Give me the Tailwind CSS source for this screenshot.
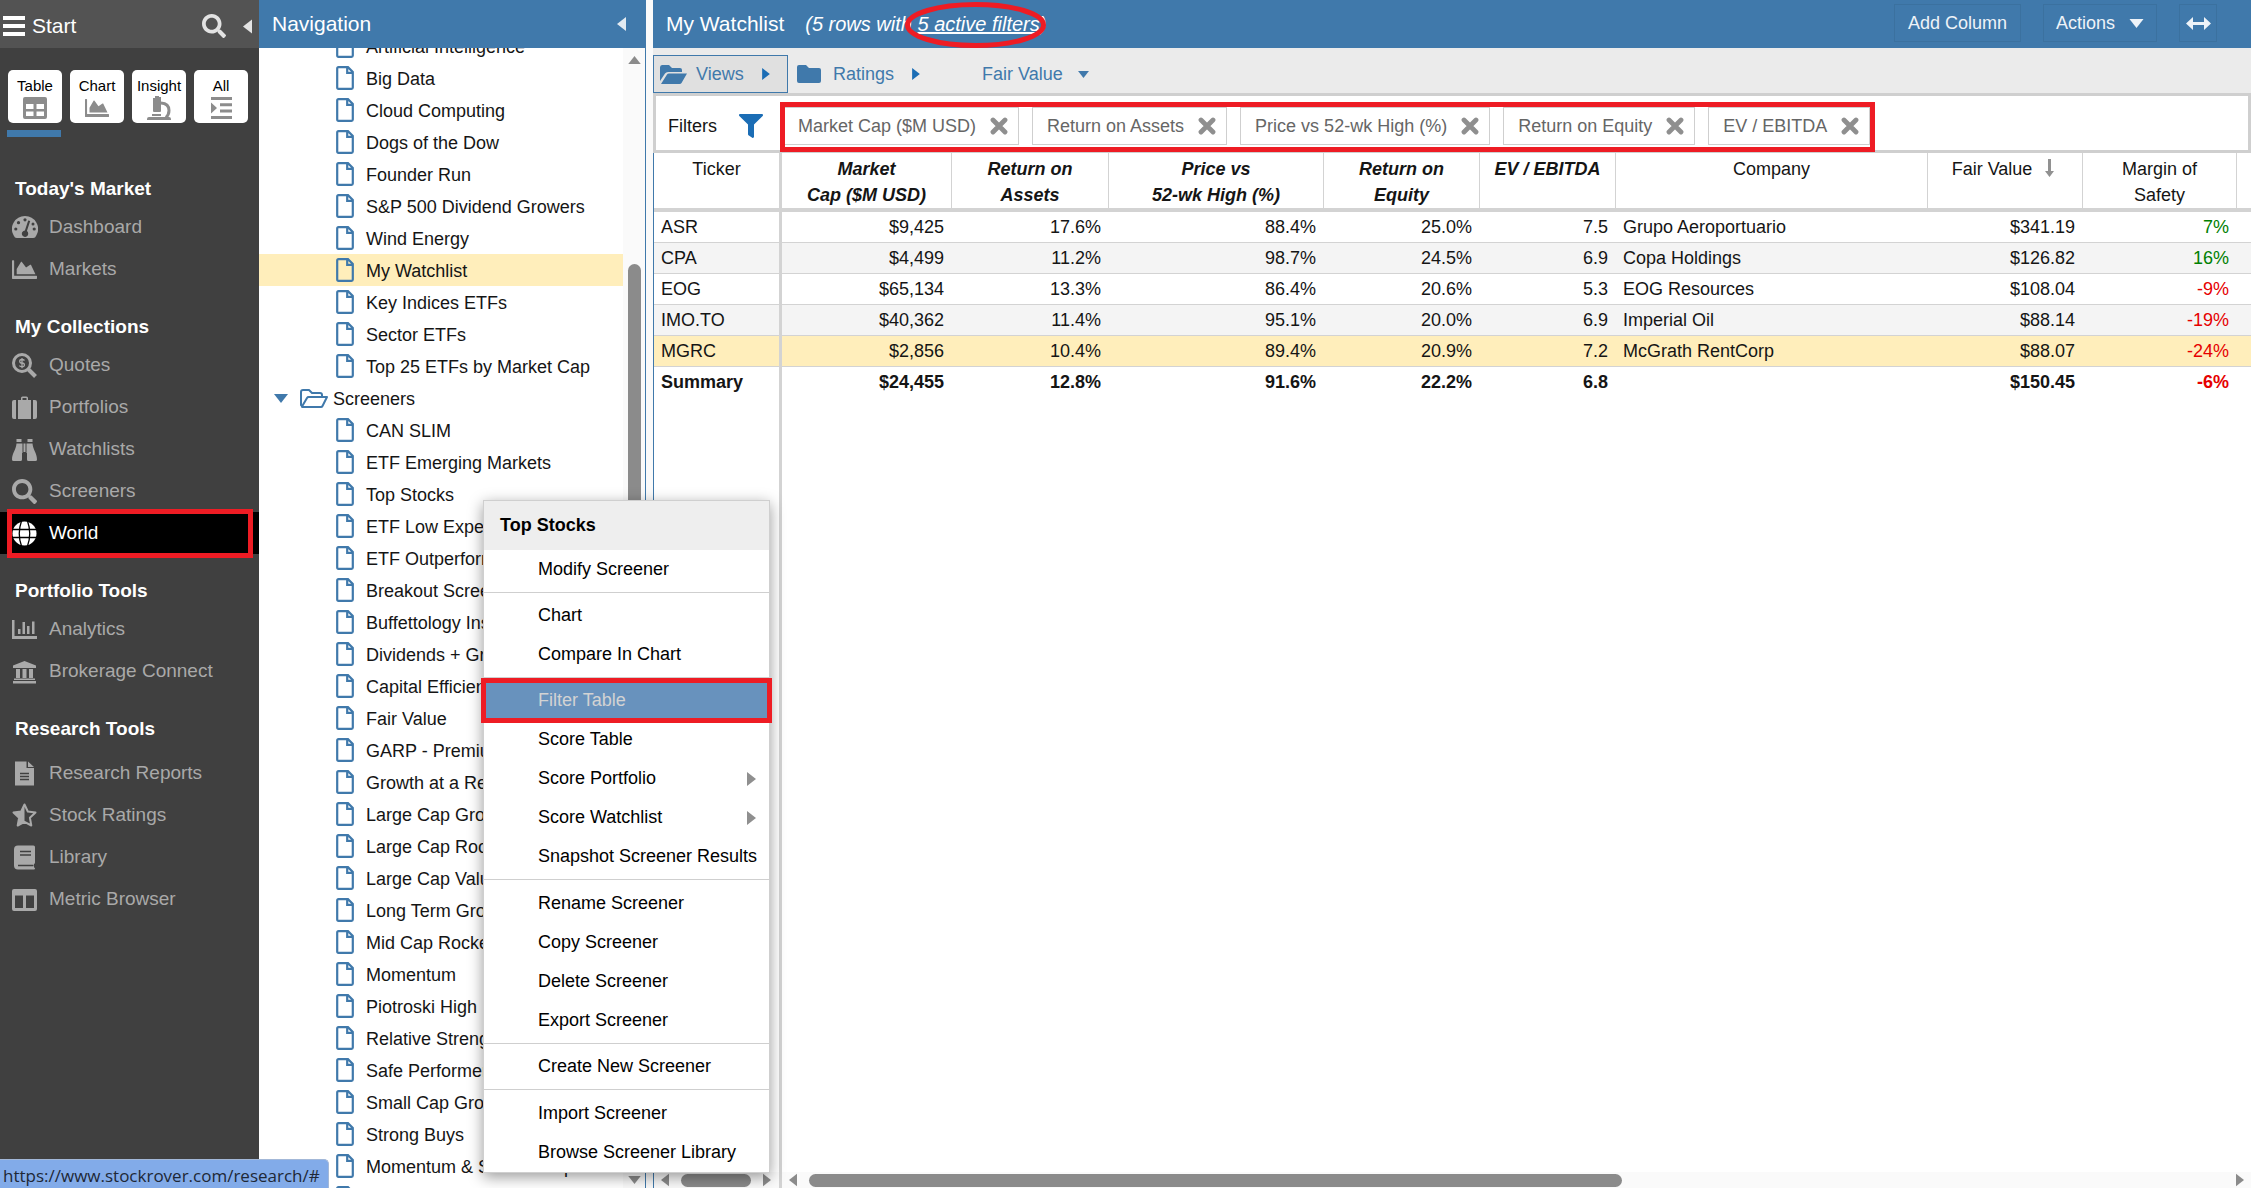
<!DOCTYPE html>
<html lang="en">
<head>
  <meta charset="UTF-8" />
  <meta name="viewport" content="width=device-width, initial-scale=1.0"/>
  <title>My Watchlist - Stock Rover</title>
  <script src="https://cdn.jsdelivr.net/npm/@tailwindcss/browser@4"></script>
</head>
<body class="h-screen overflow-hidden bg-white font-['Liberation_Sans',Arial,sans-serif] text-[18px] text-[#151515]">

  <!-- shared icons -->
  <svg class="hidden">
    <symbol id="i-search" viewBox="0 0 512 512"><path d="M505 442.700L405.300 343c-4.500-4.500-10.600-7-17-7H372c27.600-35.300 44-79.700 44-128C416 93.100 322.900 0 208 0S0 93.100 0 208s93.100 208 208 208c48.300 0 92.700-16.400 128-44v16.300c0 6.400 2.500 12.500 7 17l99.700 99.700c9.400 9.400 24.600 9.400 33.900 0l28.300-28.300c9.400-9.400 9.400-24.600.1-34zM208 336c-70.700 0-128-57.200-128-128 0-70.700 57.200-128 128-128 70.700 0 128 57.200 128 128 0 70.700-57.200 128-128 128z"/></symbol>
    <symbol id="i-area" viewBox="0 0 512 512"><path d="M500 384c6.600 0 12 5.400 12 12v40c0 6.600-5.400 12-12 12H12c-6.600 0-12-5.400-12-12V76c0-6.600 5.400-12 12-12h20c6.600 0 12 5.400 12 12v308h456zM372.700 159.500L288 216l-85.300-113.700c-5.100-6.800-15.500-6.300-19.900 1L96 248v104h384l-89.900-187.800c-3.200-6.500-11.400-8.700-17.400-4.700z"/></symbol>
    <symbol id="i-file" viewBox="0 0 18 24"><path d="M2.500 1.200H12L16.800 6v15.500q0 1.300-1.300 1.300h-13q-1.300 0-1.300-1.300v-19q0-1.300 1.300-1.300zM11.200 1.500v5.300h5.300" fill="none" stroke="currentColor" stroke-width="2.200"/></symbol>
    <symbol id="i-x" viewBox="0 0 18 18"><path d="M3 3l12 12M15 3L3 15" stroke="currentColor" stroke-width="4.800" stroke-linecap="round"/></symbol>
    <symbol id="i-left" viewBox="0 0 9 14"><path d="M9 0v14L0 7z"/></symbol>
    <symbol id="i-right" viewBox="0 0 9 14"><path d="M0 0v14l9-7z"/></symbol>
    <symbol id="i-down" viewBox="0 0 14 9"><path d="M0 0h14L7 9z"/></symbol>
    <symbol id="i-up" viewBox="0 0 14 9"><path d="M0 9h14L7 0z"/></symbol>
  </svg>

  <div class="flex h-screen pr-[7px]">

    <!-- left menu -->
    <aside class="flex w-[259px] shrink-0 flex-col bg-[#404040] text-[19px] text-[#a9a9a9]">
      <div class="flex h-12 shrink-0 items-center bg-[#535353] pt-1 pr-[7px] pl-[3px] text-[21px] text-white">
        <svg class="mr-[7px] h-5 w-[22px]" viewBox="0 0 22 20" fill="currentColor"><path d="M0 0h22v4H0zM0 8h22v4H0zM0 16h22v4H0z"/></svg>
        <span class="flex-1">Start</span>
        <button aria-label="Search"><svg class="mr-[17px] size-6 fill-[#e3e3e3]"><use href="#i-search"/></svg></button>
        <button aria-label="Collapse menu"><svg class="h-[15px] w-[9px] fill-[#e3e3e3]"><use href="#i-left"/></svg></button>
      </div>

      <div class="flex shrink-0 gap-2 px-2 pt-[22px] text-[15px] text-black">
        <button class="flex h-[53px] w-[54px] flex-col items-center rounded-[5px] bg-white pt-[5px] leading-[21px]">Table
          <svg class="size-6" viewBox="0 0 24 24" fill="#8c8c8c"><path fill-rule="evenodd" d="M2 1h20q2 0 2 2v18q0 2-2 2H2q-2 0-2-2V3q0-2 2-2zM3 8v5h7.500V8zM13.500 8v5H21V8zM3 15.500v4.500h7.500v-4.500zM13.500 15.500v4.500H21v-4.500z"/></svg>
        </button>
        <button class="flex h-[53px] w-[54px] flex-col items-center rounded-[5px] bg-white pt-[5px] leading-[21px]">Chart
          <svg class="size-6 fill-[#8c8c8c]"><use href="#i-area"/></svg>
        </button>
        <button class="flex h-[53px] w-[54px] flex-col items-center rounded-[5px] bg-white pt-[5px] leading-[21px]">Insight
          <svg class="size-6" viewBox="0 0 24 24" fill="#8c8c8c"><path d="M8 0h4v1h2v14q0 1-1 1H7q-1 0-1-1V2h2zM5 18h9v2H5zM0 24v-1q0-2 2-2h20q2 0 2 2v1z"/><path d="M14 7q8 .5 8 7.500 0 4-3 7" fill="none" stroke="#8c8c8c" stroke-width="3"/></svg>
        </button>
        <button class="flex h-[53px] w-[54px] flex-col items-center rounded-[5px] bg-white pt-[5px] leading-[21px]">All
          <svg class="size-6" viewBox="0 0 24 24" fill="#8c8c8c"><path d="M2 1h21v3H2zM11 7.300h12v3H11zM11 13.600h12v3H11zM2 20h21v3H2zM2 6.500l6 5.500-6 5.500z"/></svg>
        </button>
      </div>
      <div class="mt-[7px] ml-[7px] h-[7px] w-[54px] shrink-0 bg-[#4079ab]"></div>

      <nav class="pt-[15px]">
        <h2 class="flex h-[54px] items-center pt-5 pl-[15px] font-bold text-white">Today's Market</h2>
        <a href="#" class="flex h-[42px] items-center gap-[11px] pl-3">
          <svg class="h-[22px] w-[26px]" viewBox="0 0 26 22" fill="currentColor"><path d="M13 0a13 13 0 0 1 11.300 19.500q-1 2.500-3 2.500H4.700q-2 0-3-2.500A13 13 0 0 1 13 0z"/><g fill="#404040"><circle cx="13" cy="3.800" r="1.600"/><circle cx="6.500" cy="6.700" r="1.600"/><circle cx="3.800" cy="13" r="1.600"/><circle cx="22.200" cy="13" r="1.600"/><circle cx="21" cy="8" r="1.500"/><path d="M16.200 4.500l2 .6-3.300 10a3.200 3.200 0 1 1-2-.6z"/></g></svg>Dashboard</a>
        <a href="#" class="flex h-[42px] items-center gap-3 pl-3"><svg class="size-[25px] fill-current"><use href="#i-area"/></svg>Markets</a>

        <h2 class="flex h-[54px] items-center pt-5 pl-[15px] font-bold text-white">My Collections</h2>
        <a href="#" class="flex h-[42px] items-center gap-3 pl-3">
          <svg class="size-[25px]" viewBox="0 0 25 25" fill="none" stroke="currentColor"><circle cx="10" cy="10" r="8.500" stroke-width="3"/><path d="M16.500 16.500l7 7" stroke-width="4"/><path d="M12.500 7.500q-1-1-2.500-1-2.300 0-2.300 1.800T10 10t2.400 1.900-2.400 1.800q-1.700 0-2.600-1.100M10 5v10.200" stroke-width="1.300"/></svg>Quotes</a>
        <a href="#" class="flex h-[42px] items-center gap-3 pl-3">
          <svg class="size-[25px]" viewBox="0 0 25 25" fill="currentColor"><path d="M0 7q0-2 2-2h2v19H2q-2 0-2-2zM25 7q0-2-2-2h-2v19h2q2 0 2-2zM6 24V5h3V3q0-1.500 1.500-1.500h4Q16 1.500 16 3v2h3v19zM10.500 5h4V3h-4z"/></svg>Portfolios</a>
        <a href="#" class="flex h-[42px] items-center gap-3 pl-3">
          <svg class="size-[25px]" viewBox="0 0 25 25" fill="currentColor"><path d="M4.500 2h5v3h-5zM15.500 2h5v3h-5zM4.500 6.500h6V16H10v6.500Q10 24 8.500 24H1.500Q0 24 0 22.500C0 16 4 13 4.500 6.500zM20.500 6.500h-6V16h.5v6.500q0 1.500 1.500 1.500h7q1.500 0 1.500-1.500C25 16 21 13 20.500 6.500zM11.500 6.500h2V15h-2z"/></svg>Watchlists</a>
        <a href="#" class="flex h-[42px] items-center gap-3 pl-3"><svg class="size-[25px] fill-current"><use href="#i-search"/></svg>Screeners</a>
        <a href="#" class="relative flex h-[42px] items-center gap-3 bg-black pl-3 text-white">
          <svg class="size-[25px]" viewBox="0 0 25 25"><circle cx="12.500" cy="12.500" r="12" fill="#fff"/><path d="M0 8.500h25M0 16.500h25M9.500 0Q5 12.500 9.500 25M15.500 0Q20 12.500 15.500 25" fill="none" stroke="#000" stroke-width="1.300"/></svg>World
          <span class="absolute -top-[3px] right-[6px] -bottom-[4px] left-[7px] border-5 border-[#ee1c24]"></span>
        </a>

        <h2 class="flex h-[54px] items-center pt-5 pl-[15px] font-bold text-white">Portfolio Tools</h2>
        <a href="#" class="flex h-[42px] items-center gap-3 pl-3">
          <svg class="size-[25px]" viewBox="0 0 25 25" fill="currentColor"><path d="M0 3h2.500v16H25v3H0zM6 12h2.500v5H6zM10.500 5H13v12h-2.500zM15 9h2.500v8H15zM20 4.500h2.500V17H20z"/></svg>Analytics</a>
        <a href="#" class="flex h-[42px] items-center gap-3 pl-3">
          <svg class="size-[25px]" viewBox="0 0 25 25" fill="currentColor"><path d="M12.500 2L24 6.500V9H1V6.500zM4 10h4v9H4zM10.500 10h4v9h-4zM17 10h4v9h-4zM2 19.500h21V21H2zM1 22h23v2.500H1z"/></svg>Brokerage Connect</a>

        <h2 class="flex h-[60px] items-center pt-5 pb-[6px] pl-[15px] font-bold text-white">Research Tools</h2>
        <a href="#" class="flex h-[42px] items-center gap-3 pl-3">
          <svg class="size-[25px]" viewBox="0 0 25 25" fill="currentColor"><path d="M3 .5h11.500V7H22v17.500H3zM16 .5L22 6h-6z"/><path d="M8 12.500h9M8 15.500h9M8 18.500h9" stroke="#404040" stroke-width="1.300"/></svg>Research Reports</a>
        <a href="#" class="flex h-[42px] items-center gap-3 pl-3">
          <svg class="size-[25px]" viewBox="0 0 25 25" fill="currentColor"><path d="M12.500 1.500l3.300 7 7.700 1-5.600 5.300 1.400 7.700-6.800-3.700-6.800 3.700 1.400-7.700L1.500 9.500l7.700-1z" fill="none" stroke="currentColor" stroke-width="2" stroke-linejoin="round"/><path d="M12.500 1.500v17.300l-6.800 3.700 1.400-7.700L1.500 9.500l7.700-1z"/></svg>Stock Ratings</a>
        <a href="#" class="flex h-[42px] items-center gap-3 pl-3">
          <svg class="size-[25px]" viewBox="0 0 25 25" fill="currentColor"><path d="M6 .5h15.500q1.500 0 1.500 1.500v15.500q0 1-1 1.500v3.500q1 0 1 1t-1 1H6q-4 0-4-4v-16q0-4 4-4z"/><path d="M8 6.500h11M8 10h11M6 20.500h15.500" stroke="#404040" stroke-width="1.500"/></svg>Library</a>
        <a href="#" class="flex h-[42px] items-center gap-3 pl-3">
          <svg class="size-[25px]" viewBox="0 0 25 25" fill="currentColor"><path fill-rule="evenodd" d="M2 2h21q2 0 2 2v18q0 2-2 2H2q-2 0-2-2V4q0-2 2-2zM3 8.500V21h8V8.500zM14 8.500V21h8V8.500z"/></svg>Metric Browser</a>
      </nav>
    </aside>

    <!-- navigation tree -->
    <section class="flex w-[387px] shrink-0 flex-col">
      <div class="flex h-12 shrink-0 items-center justify-between bg-[#4079ab] pr-5 pl-[13px] text-[21px] text-white">
        <h1>Navigation</h1>
        <button aria-label="Collapse navigation"><svg class="h-[14px] w-[9px] fill-[#e3ebf2]"><use href="#i-left"/></svg></button>
      </div>
      <div class="flex min-h-0 flex-1 border-r border-[#4079ab]">
        <ul class="-mt-[18px] flex-1 overflow-hidden whitespace-nowrap [clip-path:inset(18px_0_0_0)] [&_a]:pt-[2px] [&_svg]:shrink-0">
          <li class="flex h-8 items-center pl-[77px]"><svg class="mr-3 h-6 w-[18px] text-[#4079ab]"><use href="#i-file"/></svg><a href="#">Artificial Intelligence</a></li>
          <li class="flex h-8 items-center pl-[77px]"><svg class="mr-3 h-6 w-[18px] text-[#4079ab]"><use href="#i-file"/></svg><a href="#">Big Data</a></li>
          <li class="flex h-8 items-center pl-[77px]"><svg class="mr-3 h-6 w-[18px] text-[#4079ab]"><use href="#i-file"/></svg><a href="#">Cloud Computing</a></li>
          <li class="flex h-8 items-center pl-[77px]"><svg class="mr-3 h-6 w-[18px] text-[#4079ab]"><use href="#i-file"/></svg><a href="#">Dogs of the Dow</a></li>
          <li class="flex h-8 items-center pl-[77px]"><svg class="mr-3 h-6 w-[18px] text-[#4079ab]"><use href="#i-file"/></svg><a href="#">Founder Run</a></li>
          <li class="flex h-8 items-center pl-[77px]"><svg class="mr-3 h-6 w-[18px] text-[#4079ab]"><use href="#i-file"/></svg><a href="#">S&amp;P 500 Dividend Growers</a></li>
          <li class="flex h-8 items-center pl-[77px]"><svg class="mr-3 h-6 w-[18px] text-[#4079ab]"><use href="#i-file"/></svg><a href="#">Wind Energy</a></li>
          <li class="flex h-8 items-center bg-[#ffeebb] pl-[77px]"><svg class="mr-3 h-6 w-[18px] text-[#4079ab]"><use href="#i-file"/></svg><a href="#">My Watchlist</a></li>
          <li class="flex h-8 items-center pl-[77px]"><svg class="mr-3 h-6 w-[18px] text-[#4079ab]"><use href="#i-file"/></svg><a href="#">Key Indices ETFs</a></li>
          <li class="flex h-8 items-center pl-[77px]"><svg class="mr-3 h-6 w-[18px] text-[#4079ab]"><use href="#i-file"/></svg><a href="#">Sector ETFs</a></li>
          <li class="flex h-8 items-center pl-[77px]"><svg class="mr-3 h-6 w-[18px] text-[#4079ab]"><use href="#i-file"/></svg><a href="#">Top 25 ETFs by Market Cap</a></li>
          <li class="flex h-8 items-center pl-[15px]">
            <svg class="mr-3 h-[9px] w-[14px] fill-[#4079ab]"><use href="#i-down"/></svg>
            <svg class="mr-[5px] h-[19px] w-7" viewBox="0 0 28 19" fill="none" stroke="#4079ab" stroke-width="2" stroke-linejoin="round"><path d="M2 17L1 16V3q0-2 2-2h6l3 3h8q2 0 2 2v2M2 17.500L7 9q.6-1 1.500-1H27l-4.500 9q-.5 1-1.500 1H3q-1.500 0-1-.5z"/></svg>
            <a href="#">Screeners</a></li>
          <li class="flex h-8 items-center pl-[77px]"><svg class="mr-3 h-6 w-[18px] text-[#4079ab]"><use href="#i-file"/></svg><a href="#">CAN SLIM</a></li>
          <li class="flex h-8 items-center pl-[77px]"><svg class="mr-3 h-6 w-[18px] text-[#4079ab]"><use href="#i-file"/></svg><a href="#">ETF Emerging Markets</a></li>
          <li class="flex h-8 items-center pl-[77px]"><svg class="mr-3 h-6 w-[18px] text-[#4079ab]"><use href="#i-file"/></svg><a href="#">Top Stocks</a></li>
          <li class="flex h-8 items-center pl-[77px]"><svg class="mr-3 h-6 w-[18px] text-[#4079ab]"><use href="#i-file"/></svg><a href="#">ETF Low Expense</a></li>
          <li class="flex h-8 items-center pl-[77px]"><svg class="mr-3 h-6 w-[18px] text-[#4079ab]"><use href="#i-file"/></svg><a href="#">ETF Outperform</a></li>
          <li class="flex h-8 items-center pl-[77px]"><svg class="mr-3 h-6 w-[18px] text-[#4079ab]"><use href="#i-file"/></svg><a href="#">Breakout Screen</a></li>
          <li class="flex h-8 items-center pl-[77px]"><svg class="mr-3 h-6 w-[18px] text-[#4079ab]"><use href="#i-file"/></svg><a href="#">Buffettology Insp</a></li>
          <li class="flex h-8 items-center pl-[77px]"><svg class="mr-3 h-6 w-[18px] text-[#4079ab]"><use href="#i-file"/></svg><a href="#">Dividends + Gro</a></li>
          <li class="flex h-8 items-center pl-[77px]"><svg class="mr-3 h-6 w-[18px] text-[#4079ab]"><use href="#i-file"/></svg><a href="#">Capital Efficient</a></li>
          <li class="flex h-8 items-center pl-[77px]"><svg class="mr-3 h-6 w-[18px] text-[#4079ab]"><use href="#i-file"/></svg><a href="#">Fair Value</a></li>
          <li class="flex h-8 items-center pl-[77px]"><svg class="mr-3 h-6 w-[18px] text-[#4079ab]"><use href="#i-file"/></svg><a href="#">GARP - Premium</a></li>
          <li class="flex h-8 items-center pl-[77px]"><svg class="mr-3 h-6 w-[18px] text-[#4079ab]"><use href="#i-file"/></svg><a href="#">Growth at a Reas</a></li>
          <li class="flex h-8 items-center pl-[77px]"><svg class="mr-3 h-6 w-[18px] text-[#4079ab]"><use href="#i-file"/></svg><a href="#">Large Cap Grow</a></li>
          <li class="flex h-8 items-center pl-[77px]"><svg class="mr-3 h-6 w-[18px] text-[#4079ab]"><use href="#i-file"/></svg><a href="#">Large Cap Rock</a></li>
          <li class="flex h-8 items-center pl-[77px]"><svg class="mr-3 h-6 w-[18px] text-[#4079ab]"><use href="#i-file"/></svg><a href="#">Large Cap Value</a></li>
          <li class="flex h-8 items-center pl-[77px]"><svg class="mr-3 h-6 w-[18px] text-[#4079ab]"><use href="#i-file"/></svg><a href="#">Long Term Grow</a></li>
          <li class="flex h-8 items-center pl-[77px]"><svg class="mr-3 h-6 w-[18px] text-[#4079ab]"><use href="#i-file"/></svg><a href="#">Mid Cap Rockets</a></li>
          <li class="flex h-8 items-center pl-[77px]"><svg class="mr-3 h-6 w-[18px] text-[#4079ab]"><use href="#i-file"/></svg><a href="#">Momentum</a></li>
          <li class="flex h-8 items-center pl-[77px]"><svg class="mr-3 h-6 w-[18px] text-[#4079ab]"><use href="#i-file"/></svg><a href="#">Piotroski High</a></li>
          <li class="flex h-8 items-center pl-[77px]"><svg class="mr-3 h-6 w-[18px] text-[#4079ab]"><use href="#i-file"/></svg><a href="#">Relative Strength</a></li>
          <li class="flex h-8 items-center pl-[77px]"><svg class="mr-3 h-6 w-[18px] text-[#4079ab]"><use href="#i-file"/></svg><a href="#">Safe Performers</a></li>
          <li class="flex h-8 items-center pl-[77px]"><svg class="mr-3 h-6 w-[18px] text-[#4079ab]"><use href="#i-file"/></svg><a href="#">Small Cap Grow</a></li>
          <li class="flex h-8 items-center pl-[77px]"><svg class="mr-3 h-6 w-[18px] text-[#4079ab]"><use href="#i-file"/></svg><a href="#">Strong Buys</a></li>
          <li class="flex h-8 items-center pl-[77px]"><svg class="mr-3 h-6 w-[18px] text-[#4079ab]"><use href="#i-file"/></svg><a href="#">Momentum &amp; Sector Outperform</a></li>
          <li class="flex h-8 items-center pl-[77px]"><svg class="mr-3 h-6 w-[18px] text-[#4079ab]"><use href="#i-file"/></svg></li>
        </ul>
        <div class="flex w-[22px] shrink-0 flex-col items-center bg-[#fafafa] py-1">
          <svg class="mt-1 h-2 w-[15px] shrink-0 fill-[#8b8b8b]"><use href="#i-up"/></svg>
          <div class="mt-[200px] h-[500px] w-[13px] rounded-full bg-[#8b8b8b]"></div>
          <div class="flex-1"></div>
          <svg class="h-2 w-[15px] shrink-0 fill-[#8b8b8b]"><use href="#i-down"/></svg>
        </div>
      </div>
    </section>

    <div class="w-[7px] shrink-0 bg-[#fafafa]"></div>

    <!-- watchlist table -->
    <main class="flex min-w-0 flex-1 flex-col">
      <div class="flex h-12 shrink-0 items-center bg-[#4079ab] pr-[34px] pl-[13px] text-white">
        <h1 class="mr-[21px] text-[21px]">My Watchlist</h1>
        <p class="flex-1 text-[20px] italic">(5 rows with <span class="relative"><a href="#" class="underline">5 active filters</a>)<svg class="absolute -top-[11px] -left-[13px] h-[46px] w-[143px]" viewBox="0 0 143 46"><ellipse cx="71.500" cy="23" rx="68" ry="20.500" fill="none" stroke="#ee1c24" stroke-width="5"/></svg></span></p>
        <div class="flex items-center gap-[22px] pb-[2px] text-[18px] text-[#eef3f8]">
          <button class="h-[38px] border border-[#3b719f] px-[13px]">Add Column</button>
          <button class="flex h-[38px] items-center gap-[14px] border border-[#3b719f] px-3">Actions <svg class="h-[9px] w-[15px] fill-current"><use href="#i-down"/></svg></button>
          <button aria-label="Fit width" class="flex h-[38px] w-[38px] items-center justify-center border border-[#3b719f]"><svg class="h-[13px] w-[25px] fill-current" viewBox="0 0 25 13"><path d="M7 0v5h11V0l7 6.500-7 6.500V8H7v5L0 6.500z"/></svg></button>
        </div>
      </div>

      <div class="flex h-[45px] shrink-0 items-end bg-[#ebebeb] text-[#4079ab]">
        <button class="flex h-[38px] w-[135px] items-center border border-[#4079ab] bg-[#e0e0e0] pl-[6px]">
          <svg class="mr-[9px] h-[19px] w-[27px] fill-current" viewBox="0 0 27 19"><path d="M0 2.500Q0 0 2 0h7l3 3h8q2 0 2 2v2H8Q6 7 5 8.500L0 16zM1 19l6-9.500Q7.500 8.500 9 8.500h18L21.500 18q-.5 1-2 1z"/></svg>
          Views
          <svg class="ml-[18px] h-[12px] w-[8px] fill-[#1b6db5]"><use href="#i-right"/></svg>
        </button>
        <button class="flex h-[38px] items-center pl-[9px]">
          <svg class="mr-3 h-[18px] w-6 fill-current" viewBox="0 0 24 18"><path d="M0 2q0-2 2-2h7l3 3h10q2 0 2 2v11q0 2-2 2H2q-2 0-2-2z"/></svg>
          Ratings
          <svg class="ml-[18px] h-[12px] w-[8px] fill-[#1b6db5]"><use href="#i-right"/></svg>
        </button>
        <button class="flex h-[38px] items-center pl-[62px]">Fair Value <svg class="ml-[15px] h-[7px] w-[11px] fill-current"><use href="#i-down"/></svg></button>
      </div>

      <div class="flex h-[60px] shrink-0 items-center border-3 border-[#cfcfcf] pt-[6px] pl-3">
        <span>Filters</span>
        <svg class="mr-[20px] ml-[22px] size-6 fill-[#1b6db5]" viewBox="0 0 512 512"><path d="M487.976 0H24.028C2.710 0-8.047 25.866 7.058 40.971L192 225.941V432c0 7.831 3.821 15.170 10.237 19.662l80 55.980C298.020 518.690 320 507.493 320 487.980V225.941l184.947-184.970C520.021 25.896 509.338 0 487.976 0z"/></svg>
        <div class="relative flex gap-[13px] text-[#666]">
          <button class="flex h-[38px] items-center gap-[14px] border border-[#cfcfcf] pr-[10px] pl-[14px]">Market Cap ($M USD)<svg class="size-[18px] text-[#8f8f8f]"><use href="#i-x"/></svg></button>
          <button class="flex h-[38px] items-center gap-[14px] border border-[#cfcfcf] pr-[10px] pl-[14px]">Return on Assets<svg class="size-[18px] text-[#8f8f8f]"><use href="#i-x"/></svg></button>
          <button class="flex h-[38px] items-center gap-[14px] border border-[#cfcfcf] pr-[10px] pl-[14px]">Price vs 52-wk High (%)<svg class="size-[18px] text-[#8f8f8f]"><use href="#i-x"/></svg></button>
          <button class="flex h-[38px] items-center gap-[14px] border border-[#cfcfcf] pr-[10px] pl-[14px]">Return on Equity<svg class="size-[18px] text-[#8f8f8f]"><use href="#i-x"/></svg></button>
          <button class="flex h-[38px] items-center gap-[14px] border border-[#cfcfcf] pr-[10px] pl-[14px]">EV / EBITDA<svg class="size-[18px] text-[#8f8f8f]"><use href="#i-x"/></svg></button>
          <span class="pointer-events-none absolute -top-[5px] -right-[5px] -bottom-[7px] -left-[3px] border-5 border-[#ee1c24]"></span>
        </div>
      </div>

      <div class="flex min-h-0 flex-1 flex-col border-l border-[#4079ab]">
        <table class="w-full table-fixed border-separate border-spacing-0 text-right">
          <colgroup>
            <col class="w-[128px]"><col class="w-[170px]"><col class="w-[157px]"><col class="w-[215px]"><col class="w-[156px]"><col class="w-[136px]"><col><col class="w-[155px]"><col class="w-[154px]"><col class="w-[14px]">
          </colgroup>
          <thead>
            <tr class="h-[59px] text-center align-top leading-[26px] [&>th]:border-b-4 [&>th]:border-[#d3d3d3] [&>th]:pt-[3px]">
              <th class="border-r-3 font-normal">Ticker</th>
              <th class="border-r italic">Market<br>Cap ($M USD)</th>
              <th class="border-r italic">Return on<br>Assets</th>
              <th class="border-r italic">Price vs<br>52-wk High (%)</th>
              <th class="border-r italic">Return on<br>Equity</th>
              <th class="border-r italic">EV / EBITDA</th>
              <th class="border-r font-normal">Company</th>
              <th class="border-r font-normal">Fair Value <svg class="mr-1 mb-1 ml-2 inline h-[18px] w-[9px] fill-[#919191]" viewBox="0 0 9 18"><path d="M3 0h3v12h3l-4.500 6L0 12h3z"/></svg></th>
              <th class="border-r font-normal">Margin of<br>Safety</th>
              <th></th>
            </tr>
          </thead>
          <tbody class="[&_td]:border-b [&_td]:border-[#d3d3d3] [&_td]:pr-2 [&_td:first-child]:border-r-3 [&_td:first-child]:pl-[7px] [&_td:first-child]:text-left [&_td:nth-child(7)]:pl-[7px] [&_td:nth-child(7)]:text-left">
            <tr class="h-[31px]"><td>ASR</td><td>$9,425</td><td>17.6%</td><td>88.4%</td><td>25.0%</td><td>7.5</td><td>Grupo Aeroportuario</td><td>$341.19</td><td class="text-[#008000]">7%</td><td></td></tr>
            <tr class="h-[31px] bg-[#f4f4f4]"><td>CPA</td><td>$4,499</td><td>11.2%</td><td>98.7%</td><td>24.5%</td><td>6.9</td><td>Copa Holdings</td><td>$126.82</td><td class="text-[#008000]">16%</td><td></td></tr>
            <tr class="h-[31px]"><td>EOG</td><td>$65,134</td><td>13.3%</td><td>86.4%</td><td>20.6%</td><td>5.3</td><td>EOG Resources</td><td>$108.04</td><td class="text-[#e60000]">-9%</td><td></td></tr>
            <tr class="h-[31px] bg-[#f4f4f4]"><td>IMO.TO</td><td>$40,362</td><td>11.4%</td><td>95.1%</td><td>20.0%</td><td>6.9</td><td>Imperial Oil</td><td>$88.14</td><td class="text-[#e60000]">-19%</td><td></td></tr>
            <tr class="h-[31px] bg-[#ffeebb]"><td>MGRC</td><td>$2,856</td><td>10.4%</td><td>89.4%</td><td>20.9%</td><td>7.2</td><td>McGrath RentCorp</td><td>$88.07</td><td class="text-[#e60000]">-24%</td><td></td></tr>
          </tbody>
          <tfoot class="[&_td]:pr-2">
            <tr class="h-[31px] font-bold"><td class="border-r-3 border-[#d3d3d3] pl-[7px] text-left">Summary</td><td>$24,455</td><td>12.8%</td><td>91.6%</td><td>22.2%</td><td>6.8</td><td></td><td>$150.45</td><td class="text-[#e60000]">-6%</td><td></td></tr>
          </tfoot>
        </table>
        <div class="w-[128px] flex-1 border-r-3 border-[#d3d3d3]"></div>
        <!-- horizontal scroll bars -->
        <div class="flex h-4 shrink-0 bg-[#fafafa]">
          <div class="flex w-[128px] items-center border-r-3 border-[#d3d3d3] pl-[7px]">
            <svg class="h-[14px] w-2 fill-[#8b8b8b]"><use href="#i-left"/></svg>
            <div class="mx-3 h-[13px] w-[70px] rounded-full bg-[#8b8b8b]"></div>
            <svg class="h-[14px] w-2 fill-[#8b8b8b]"><use href="#i-right"/></svg>
          </div>
          <div class="flex flex-1 items-center px-[7px]">
            <svg class="mr-3 h-[14px] w-2 fill-[#8b8b8b]"><use href="#i-left"/></svg>
            <div class="flex-1"><div class="h-[13px] w-[57%] rounded-full bg-[#8b8b8b]"></div></div>
            <svg class="h-[14px] w-2 fill-[#8b8b8b]"><use href="#i-right"/></svg>
          </div>
        </div>
      </div>
    </main>
  </div>

  <!-- right-click menu of a screener -->
  <div class="absolute top-[500px] left-[483px] w-[287px] border border-[#cfcfcf] bg-white text-black shadow-[0_4px_14px_rgba(0,0,0,0.4)]">
    <h3 class="flex h-[49px] items-center bg-[#eee] pl-4 font-bold">Top Stocks</h3>
    <button class="block h-[39px] w-full pl-[54px] text-left">Modify Screener</button>
    <hr class="my-[3px] border-[#cfcfcf]">
    <button class="block h-[39px] w-full pl-[54px] text-left">Chart</button>
    <button class="block h-[39px] w-full pl-[54px] text-left">Compare In Chart</button>
    <hr class="my-[3px] border-[#cfcfcf]">
    <button class="relative block h-[39px] w-full bg-[#6892bd] pl-[54px] text-left text-[#d3d3d3]">Filter Table<span class="absolute -inset-[3px] border-5 border-[#ee1c24]"></span></button>
    <button class="block h-[39px] w-full pl-[54px] text-left">Score Table</button>
    <button class="flex h-[39px] w-full items-center justify-between pr-[13px] pl-[54px]">Score Portfolio <svg class="h-[14px] w-[9px] fill-[#8f8f8f]"><use href="#i-right"/></svg></button>
    <button class="flex h-[39px] w-full items-center justify-between pr-[13px] pl-[54px]">Score Watchlist <svg class="h-[14px] w-[9px] fill-[#8f8f8f]"><use href="#i-right"/></svg></button>
    <button class="block h-[39px] w-full pl-[54px] text-left">Snapshot Screener Results</button>
    <hr class="mt-[3px] mb-1 border-[#cfcfcf]">
    <button class="block h-[39px] w-full pl-[54px] text-left">Rename Screener</button>
    <button class="block h-[39px] w-full pl-[54px] text-left">Copy Screener</button>
    <button class="block h-[39px] w-full pl-[54px] text-left">Delete Screener</button>
    <button class="block h-[39px] w-full pl-[54px] text-left">Export Screener</button>
    <hr class="my-[3px] border-[#cfcfcf]">
    <button class="block h-[39px] w-full pl-[54px] text-left">Create New Screener</button>
    <hr class="mt-[3px] mb-1 border-[#cfcfcf]">
    <button class="block h-[39px] w-full pl-[54px] text-left">Import Screener</button>
    <button class="block h-[39px] w-full pl-[54px] text-left">Browse Screener Library</button>
  </div>

  <!-- link address in the corner -->
  <div class="absolute bottom-0 left-0 flex h-[29px] w-[329px] items-center rounded-tr-[5px] border-t border-r border-[#a3b8d8] bg-[#82abe9] pt-[3px] pl-[3px] font-['Open_Sans',sans-serif] text-[17px] text-[#202836]">https://www.stockrover.com/research/#</div>
</body>
</html>
